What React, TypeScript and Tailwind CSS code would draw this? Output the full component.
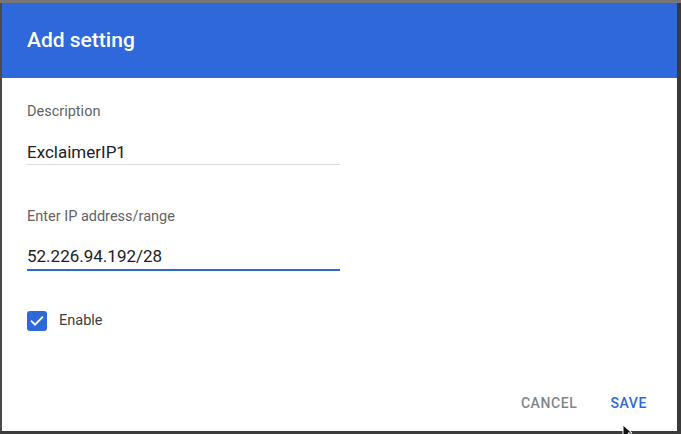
import React from "react";

export default function App() {
  return (
    <div
      className="relative w-[681px] h-[434px] overflow-hidden bg-[#3c3c3c]"
      style={{ fontFamily: "Roboto, 'Liberation Sans', sans-serif" }}
    >
      <div className="h-[3px] bg-[#767676]" />
      <div className="flex h-[428px]">
        <div className="w-[2px] bg-[#4a4a4a]" />
        <div className="flex-1 flex flex-col bg-white">
          <div className="h-[75px] bg-[#2e68db] flex items-center pl-[25px] pb-[1px]">
            <h1 className="text-[21px] leading-[24px] text-white font-medium">Add setting</h1>
          </div>
          <div className="flex-1 flex flex-col pl-[25px] pt-[24px]">
            <div className="w-[313px]">
              <div className="text-[14.5px] leading-[20px] text-[#5f6368]">Description</div>
              <div className="mt-[18px] h-[25px] border-b border-[#dadce0] text-[17px] leading-[24px] text-[#202124]">
                ExclaimerIP1
              </div>
              <div className="mt-[42px] text-[14.5px] leading-[20px] text-[#5f6368]">Enter IP address/range</div>
              <div className="mt-[17px] h-[27px] border-b-2 border-[#2e68db] text-[17px] leading-[24px] text-[#202124]">
                52.226.94.192/28
              </div>
            </div>
            <div className="mt-[40px] flex items-center h-[20px]">
              <div className="w-[20px] h-[20px] rounded-[3px] bg-[#2e68db] flex items-center justify-center">
                <svg width="16" height="16" viewBox="0 0 24 24" fill="none">
                  <path d="M4 12.5l5 5L20 6.5" stroke="white" strokeWidth="2.8" strokeLinecap="square" />
                </svg>
              </div>
              <span className="ml-[12px] text-[14.5px] leading-[20px] text-[#3c4043]">Enable</span>
            </div>
            <div className="flex-1" />
            <div className="flex justify-end items-center h-[36px] mb-[10px] pr-[30px] gap-[33px]">
              <span className="text-[14px] font-medium tracking-[0.6px] text-[#80868b]">CANCEL</span>
              <span className="text-[14px] font-medium tracking-[0.6px] text-[#2e68db]">SAVE</span>
            </div>
          </div>
        </div>
        <div className="w-[4px] bg-[#3a3a3a]" />
      </div>
      <svg className="absolute left-[622px] top-[424px]" width="12" height="14" viewBox="0 0 12 14">
        <path d="M1 1 L1 13 L4 10 L6.5 14 L8.5 13 L6 9 L10 9 Z" fill="#111" stroke="white" strokeWidth="1" />
      </svg>
    </div>
  );
}
